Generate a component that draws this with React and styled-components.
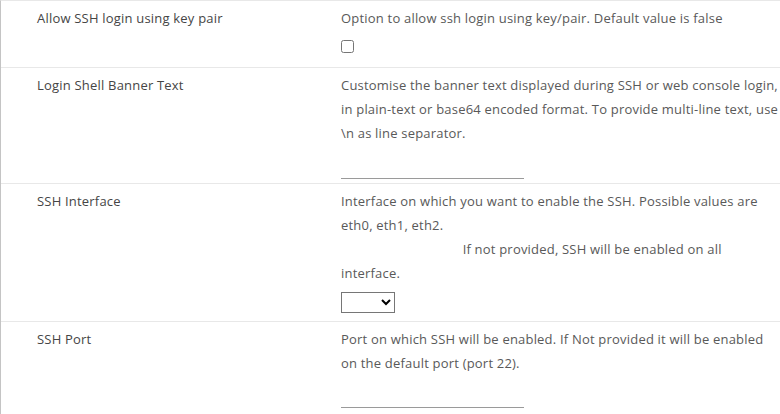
import React from 'react';
import styled, { createGlobalStyle } from 'styled-components';

const GlobalStyle = createGlobalStyle`
  html, body {
    margin: 0;
    padding: 0;
    background: #fff;
    overflow: hidden;
  }
  body {
    font-family: "Open Sans", "Liberation Sans", sans-serif;
  }
`;

const Table = styled.div`
  border-left: 1px solid #c4c4c4;
  border-top: 1px solid #e8e8e8;
`;

const Row = styled.div`
  display: grid;
  grid-template-columns: 340px 1fr;
  padding: 5px 0 4px;
  border-bottom: 1px solid #e8e8e8;
`;

const Label = styled.div`
  padding-left: 36px;
  font-size: 13px;
  line-height: 24px;
  letter-spacing: 0.2px;
  color: #454545;
`;

const Cell = styled.div`
  min-width: 0;
`;

const Description = styled.div`
  font-size: 13px;
  line-height: 24px;
  letter-spacing: 0.2px;
  color: #595959;
  white-space: ${(p) => (p.$pre ? 'pre-wrap' : 'normal')};
`;

const Checkbox = styled.input`
  display: block;
  width: 13px;
  height: 13px;
  margin: 10px 0 10px;
`;

const LineInput = styled.input`
  display: block;
  width: 183px;
  height: 23px;
  margin: ${(p) => p.$margin || '10px 0 0'};
  padding: 0;
  border: none;
  border-bottom: 1px solid #9a9a9a;
  outline: none;
  background: transparent;
`;

const Select = styled.select`
  display: block;
  width: 54px;
  height: 21px;
  margin: 7px 0 4px;
  border: 1px solid #767676;
  border-radius: 0;
  background: #fff;
`;

const interfaceText =
  'Interface on which you want to enable the SSH. Possible values are eth0, eth1, eth2.\n' +
  '                                  If not provided, SSH will be enabled on all interface.';

export default function App() {
  return (
    <>
      <GlobalStyle />
      <Table>
        <Row>
          <Label>Allow SSH login using key pair</Label>
          <Cell>
            <Description>Option to allow ssh login using key/pair. Default value is false</Description>
            <Checkbox type="checkbox" />
          </Cell>
        </Row>
        <Row>
          <Label>Login Shell Banner Text</Label>
          <Cell>
            <Description>
              Customise the banner text displayed during SSH or web console login, in plain-text or base64
              encoded format. To provide multi-line text, use \n as line separator.
            </Description>
            <LineInput type="text" />
          </Cell>
        </Row>
        <Row>
          <Label>SSH Interface</Label>
          <Cell>
            <Description $pre>{interfaceText}</Description>
            <Select />
          </Cell>
        </Row>
        <Row>
          <Label>SSH Port</Label>
          <Cell>
            <Description>
              Port on which SSH will be enabled. If Not provided it will be enabled on the default port (port 22).
            </Description>
            <LineInput type="text" $margin="9px 0 4px" />
          </Cell>
        </Row>
      </Table>
    </>
  );
}
